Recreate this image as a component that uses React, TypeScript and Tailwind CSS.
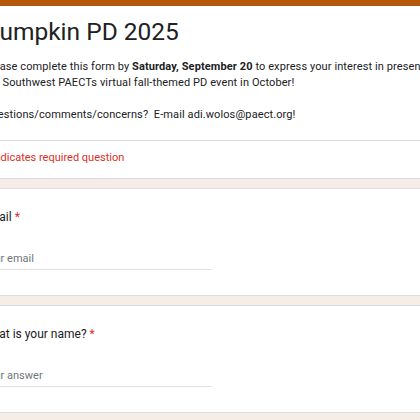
import React from 'react';

const Question: React.FC<{ label: string; placeholder: string }> = ({ label, placeholder }) => {
    return (
        <div className="rounded-lg border border-[#dadce0] bg-white px-[22px] pt-[20px] pb-[25px]">
            <div className="text-[12px] leading-4 text-[#202124]">
                {label} <span className="text-[#d93025]">*</span>
            </div>
            <div className="mt-[26px] w-[229px] border-b border-[#e0e0e0] pb-[2px] text-[11px] leading-4 text-[#70757a]">
                {placeholder}
            </div>
        </div>
    );
};

export default function App() {
    return (
        <div className="h-[420px] w-[420px] overflow-hidden bg-[#f6eee6] font-['Roboto',sans-serif]">
            <div className="-ml-[41px] flex w-[520px] flex-col gap-[9px]">
                <div className="overflow-hidden rounded-b-lg border border-t-0 border-[#dadce0] bg-white">
                    <div className="h-[6px] bg-[#b5580b]" />
                    <div className="px-6 pt-[10px] pb-[17px]">
                        <h1 className="text-[24.5px] leading-8 text-[#202124]">Pumpkin PD 2025</h1>
                        <p className="mt-[11px] whitespace-nowrap text-[11px] leading-4 tracking-[0.1px] text-[#202124]">
                            Please complete this form by <b>Saturday, September 20</b> to express your interest in presenting at
                            <br />
                            the Southwest PAECTs virtual fall-themed PD event in October!
                            <br />
                            <br />
                            Questions/comments/concerns?&nbsp; E-mail adi.wolos@paect.org!
                        </p>
                    </div>
                    <div className="border-t border-[#dadce0] px-6 pt-[9px] pb-[12px] text-[11px] leading-4 text-[#d93025]">
                        * Indicates required question
                    </div>
                </div>
                <Question label="Email" placeholder="Your email" />
                <Question label="What is your name?" placeholder="Your answer" />
            </div>
        </div>
    );
}
